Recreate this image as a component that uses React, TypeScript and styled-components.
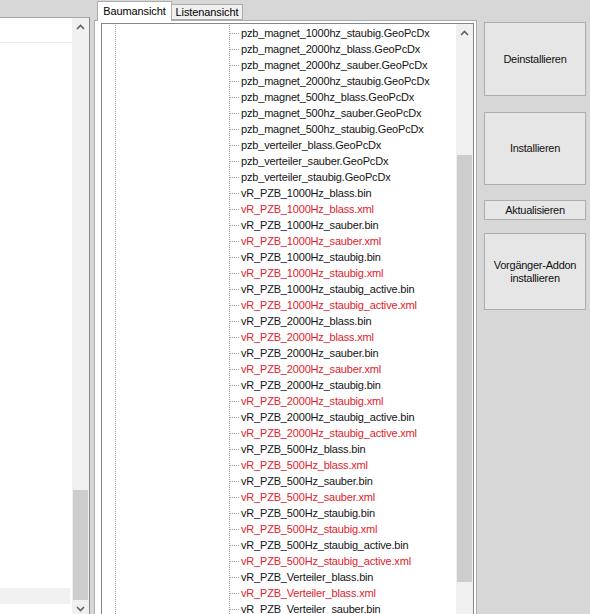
import React from 'react';
import styled, { createGlobalStyle } from 'styled-components';

const GlobalStyle = createGlobalStyle`
  html, body { margin: 0; padding: 0; background: #d7d7d7; }
  body {
    font-family: "Liberation Sans", Arial, sans-serif;
    font-size: 11px;
    color: #000;
  }
  #root { width: 590px; height: 614px; overflow: hidden; }
  * { box-sizing: border-box; }
`;

const Window = styled.div`
  display: flex;
  width: 590px;
  height: 614px;
  overflow: hidden;
  background: #d7d7d7;
`;

/* ---------- left list ---------- */
const LeftPane = styled.div`
  margin-top: 17px;
  width: 90px;
  flex-shrink: 0;
  display: flex;
  background: #fff;
  border-top: 1px solid #a7a7a7;
  border-right: 1px solid #8c8c8c;
`;

const LeftList = styled.div`
  flex: 1;
  display: flex;
  flex-direction: column;
`;

const FirstRow = styled.div`
  height: 25px;
  border-bottom: 1px solid #ececec;
`;

const ListFill = styled.div`
  flex: 1;
`;

const BottomBand = styled.div`
  height: 16px;
  margin-bottom: 10px;
  margin-right: 2px;
  background: #f0f0f0;
`;

/* ---------- scrollbar ---------- */
const ScrollBar = styled.div`
  width: 17px;
  flex-shrink: 0;
  display: flex;
  flex-direction: column;
  background: #f0f0f0;
`;

const ArrowBox = styled.div`
  height: 17px;
  flex-shrink: 0;
  display: flex;
  align-items: center;
  justify-content: center;
`;

const Thumb = styled.div<{ $offset: number; $size: number }>`
  margin: ${(p) => p.$offset}px 1px 0 1px;
  height: ${(p) => p.$size}px;
  flex-shrink: 0;
  background: #cdcdcd;
`;

const Chevron: React.FC<{ down?: boolean }> = ({ down }) => (
  <svg width="9" height="6" viewBox="0 0 9 6">
    <polyline
      points={down ? '1,1 4.5,4.5 8,1' : '1,5 4.5,1.5 8,5'}
      fill="none"
      stroke="#606060"
      strokeWidth="1.6"
    />
  </svg>
);

/* ---------- tab control ---------- */
const TabControl = styled.div`
  margin-left: 4px;
  width: 383px;
  flex-shrink: 0;
  display: flex;
  flex-direction: column;
`;

const TabStrip = styled.div`
  height: 20px;
  display: flex;
  align-items: flex-end;
  padding-left: 3px;
  position: relative;
  z-index: 1;
`;

const Tab = styled.div<{ $active?: boolean; $w: number }>`
  width: ${(p) => p.$w}px;
  height: ${(p) => (p.$active ? 20 : 16)}px;
  margin-bottom: ${(p) => (p.$active ? -1 : 0)}px;
  background: ${(p) => (p.$active ? '#fff' : '#f0f0f0')};
  border: 1px solid #acacac;
  border-bottom: ${(p) => (p.$active ? 'none' : '1px solid #acacac')};
  border-left: ${(p) => (p.$active ? '1px solid #acacac' : 'none')};
  display: flex;
  align-items: center;
  justify-content: center;
  padding-bottom: ${(p) => (p.$active ? 1 : 0)}px;
  font-size: 11px;
  letter-spacing: -0.1px;
  color: #000;
`;

const TabPage = styled.div`
  flex: 1;
  display: flex;
  background: #fff;
  border: 1px solid #acacac;
  border-bottom: none;
  padding: 2px 2px 0 6px;
  min-height: 0;
`;

const TreeView = styled.div`
  flex: 1;
  display: flex;
  border: 1px solid #828790;
  border-bottom: none;
  background: #fff;
  overflow: hidden;
`;

const TreeBody = styled.div`
  flex: 1;
  padding-top: 1px;
  overflow: hidden;
`;

const dotV = 'linear-gradient(to bottom, #9a9a9a 50%, transparent 50%)';
const dotH = 'linear-gradient(to right, #9a9a9a 50%, transparent 50%)';

const Row = styled.div`
  display: flex;
  height: 16px;
  align-items: stretch;
  white-space: nowrap;
`;

const Guides = styled.span`
  width: 127px;
  flex-shrink: 0;
  background-image: ${dotV};
  background-size: 1px 2px;
  background-repeat: repeat-y;
  background-position: 13px 0;
`;

const Branch = styled.span`
  width: 10px;
  margin-right: 2px;
  flex-shrink: 0;
  background-image: ${dotV}, ${dotH};
  background-size: 1px 2px, 2px 1px;
  background-repeat: repeat-y, repeat-x;
  background-position: 0 0, 1px 8px;
`;

const Label = styled.span<{ $red?: boolean }>`
  line-height: 16px;
  font-size: 11px;
  letter-spacing: -0.18px;
  color: ${(p) => (p.$red ? '#e3212a' : '#141414')};
`;

/* ---------- buttons ---------- */
const ButtonPanel = styled.div`
  flex: 1;
  display: flex;
  flex-direction: column;
  padding: 22px 0 0 7px;
`;

const Button = styled.div<{ $h: number; $gap: number }>`
  width: 102px;
  height: ${(p) => p.$h}px;
  margin-top: ${(p) => p.$gap}px;
  flex-shrink: 0;
  background: #e6e6e6;
  border: 1px solid #adadad;
  display: flex;
  align-items: center;
  justify-content: center;
  text-align: center;
  font-size: 11px;
  line-height: 13px;
  letter-spacing: -0.25px;
  color: #111;
`;

type Item = { name: string; red?: boolean };

const items: Item[] = [
  { name: 'pzb_magnet_1000hz_staubig.GeoPcDx' },
  { name: 'pzb_magnet_2000hz_blass.GeoPcDx' },
  { name: 'pzb_magnet_2000hz_sauber.GeoPcDx' },
  { name: 'pzb_magnet_2000hz_staubig.GeoPcDx' },
  { name: 'pzb_magnet_500hz_blass.GeoPcDx' },
  { name: 'pzb_magnet_500hz_sauber.GeoPcDx' },
  { name: 'pzb_magnet_500hz_staubig.GeoPcDx' },
  { name: 'pzb_verteiler_blass.GeoPcDx' },
  { name: 'pzb_verteiler_sauber.GeoPcDx' },
  { name: 'pzb_verteiler_staubig.GeoPcDx' },
];

const freqs = ['1000Hz', '2000Hz', '500Hz'];
const variants = ['blass', 'sauber', 'staubig', 'staubig_active'];
freqs.forEach((f) => {
  variants.forEach((v) => {
    items.push({ name: `vR_PZB_${f}_${v}.bin` });
    items.push({ name: `vR_PZB_${f}_${v}.xml`, red: true });
  });
});
items.push({ name: 'vR_PZB_Verteiler_blass.bin' });
items.push({ name: 'vR_PZB_Verteiler_blass.xml', red: true });
items.push({ name: 'vR_PZB_Verteiler_sauber.bin' });

export default function App() {
  return (
    <>
      <GlobalStyle />
      <Window>
        <LeftPane>
          <LeftList>
            <FirstRow />
            <ListFill />
            <BottomBand />
          </LeftList>
          <ScrollBar>
            <ArrowBox>
              <Chevron />
            </ArrowBox>
            <Thumb $offset={455} $size={110} />
            <ArrowBox>
              <Chevron down />
            </ArrowBox>
          </ScrollBar>
        </LeftPane>

        <TabControl>
          <TabStrip>
            <Tab $active $w={75}>Baumansicht</Tab>
            <Tab $w={71}>Listenansicht</Tab>
          </TabStrip>
          <TabPage>
            <TreeView>
              <TreeBody>
                {items.map((it) => (
                  <Row key={it.name}>
                    <Guides />
                    <Branch />
                    <Label $red={it.red}>{it.name}</Label>
                  </Row>
                ))}
              </TreeBody>
              <ScrollBar>
                <ArrowBox>
                  <Chevron />
                </ArrowBox>
                <Thumb $offset={114} $size={427} />
              </ScrollBar>
            </TreeView>
          </TabPage>
        </TabControl>

        <ButtonPanel>
          <Button $h={74} $gap={0}>Deinstallieren</Button>
          <Button $h={73} $gap={16}>Installieren</Button>
          <Button $h={20} $gap={15}>Aktualisieren</Button>
          <Button $h={77} $gap={13}>
            Vorgänger-Addon
            <br />
            installieren
          </Button>
        </ButtonPanel>
      </Window>
    </>
  );
}
